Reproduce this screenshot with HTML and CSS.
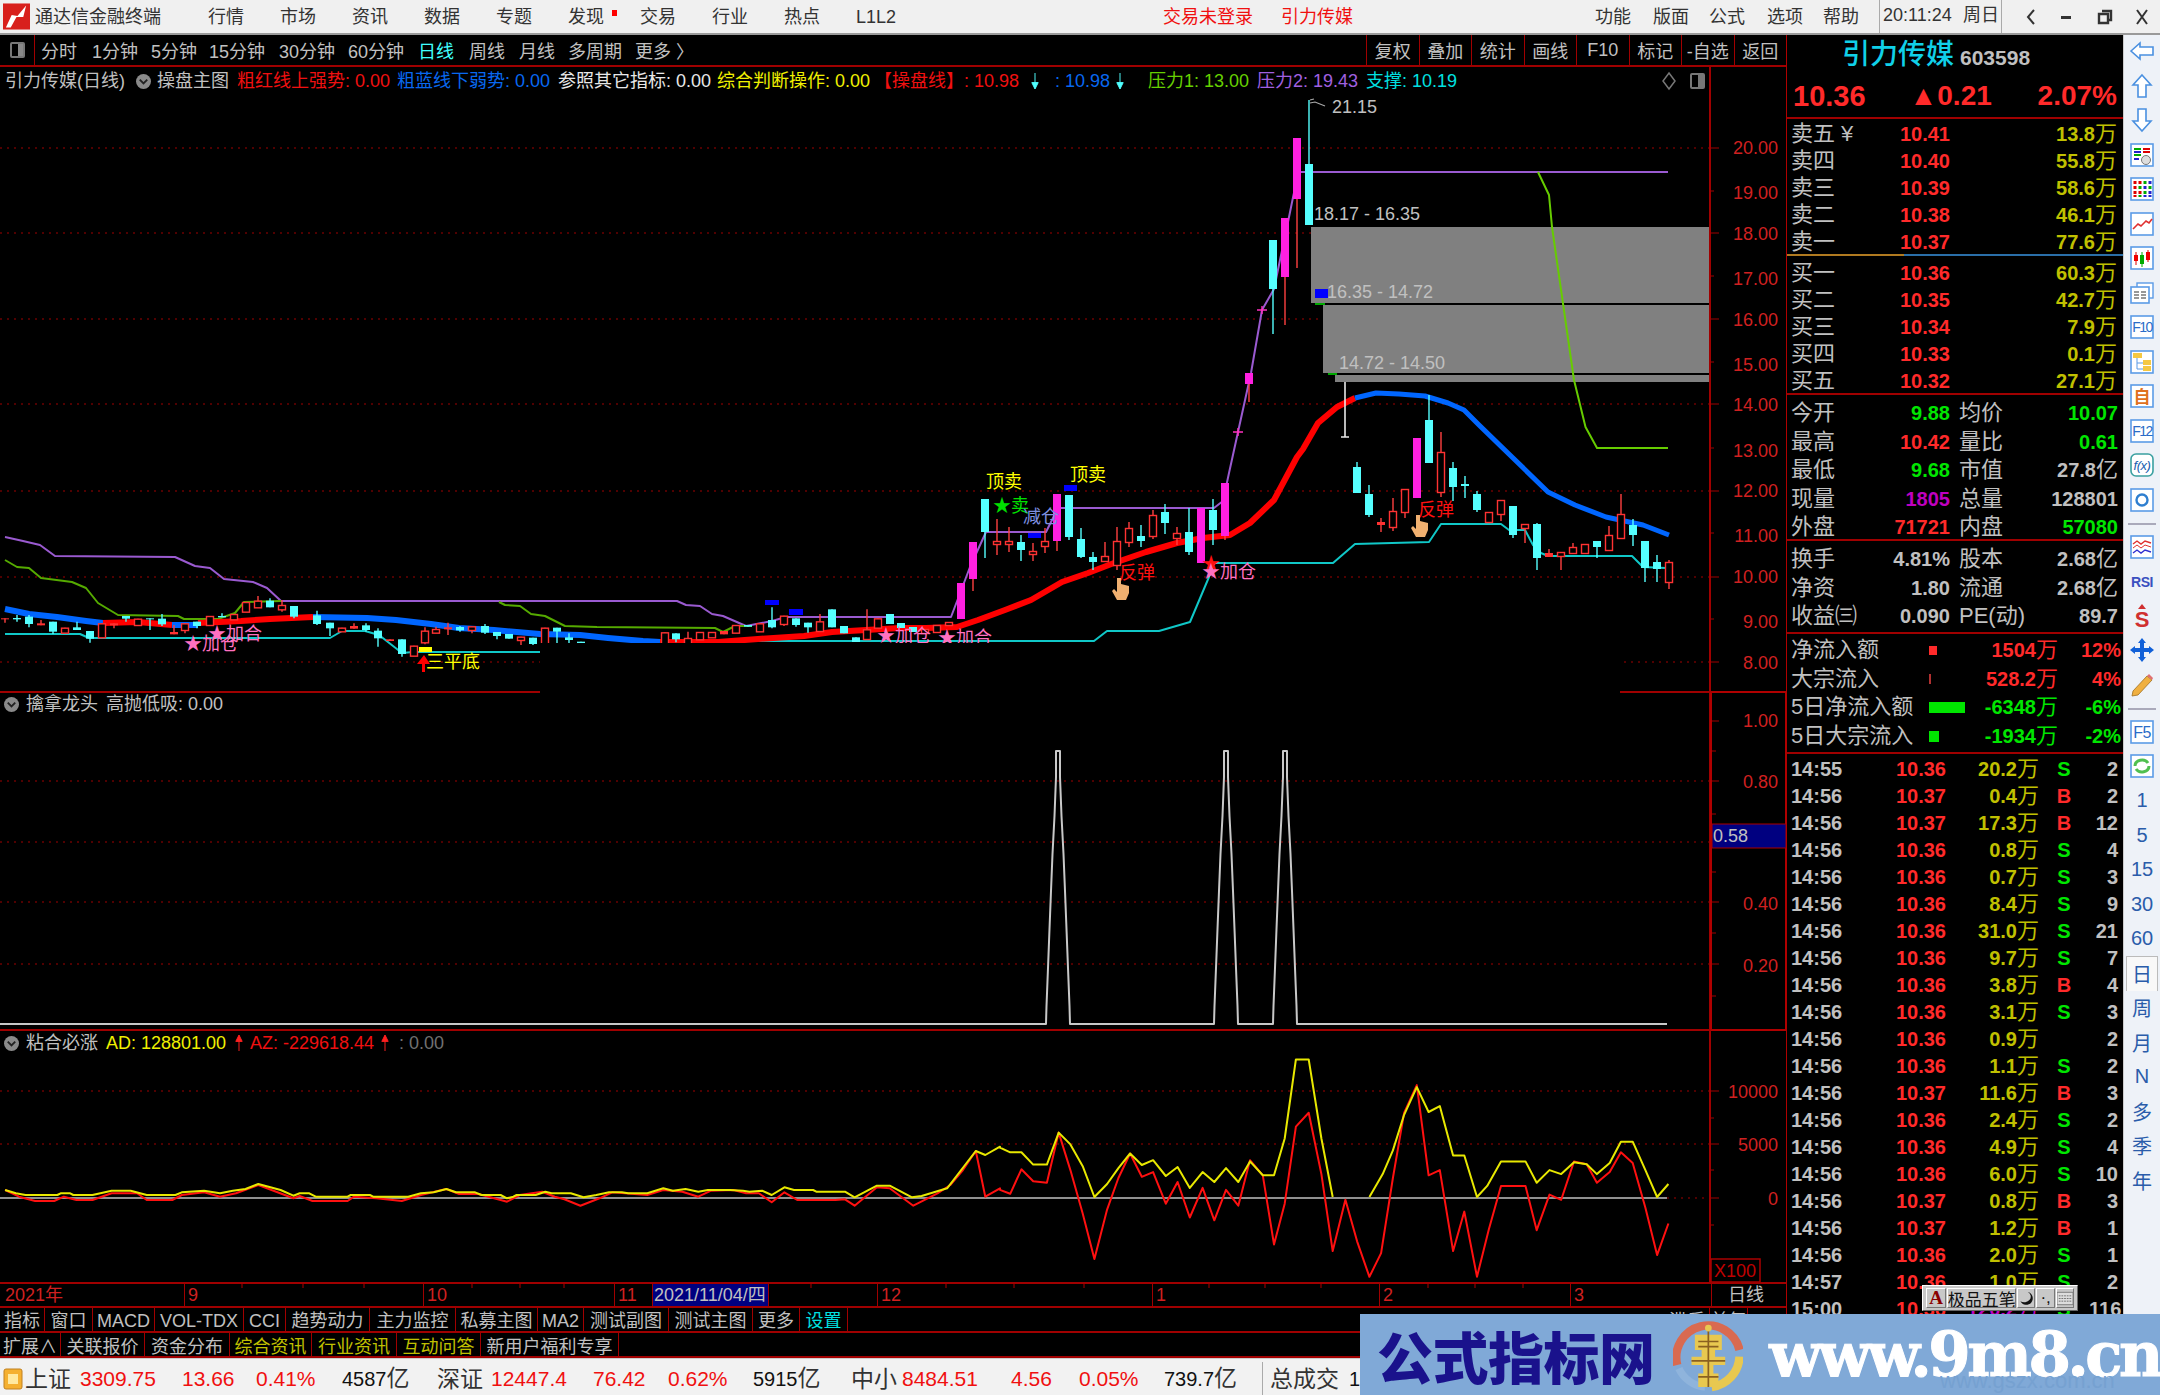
FILE: index.html
```html
<!DOCTYPE html>
<html lang="zh-CN">
<head>
<meta charset="utf-8">
<title>通达信金融终端</title>
<link rel="stylesheet" href="styles.css">
</head>
<body>
<div class="app">
  <header class="menubar">
    <svg class="logo" viewBox="0 0 28 27"><rect width="28" height="27" fill="#d8201c"/><path d="M3 25 L9 12 L15 13 L24 2 L21 14 L14 14 L8 25Z" fill="#fff"/></svg>
    <span class="apptitle">通达信金融终端</span>
    <span>行情</span><span>市场</span><span>资讯</span><span>数据</span><span>专题</span><span class="dot">发现</span><span>交易</span><span>行业</span><span>热点</span><span>L1L2</span>
    <span></span>
    <span class="alert">交易未登录</span><span class="alert">引力传媒</span>
    <span>功能</span><span>版面</span><span>公式</span><span>选项</span><span>帮助</span>
    <span class="clock">20:11:24</span><span class="week">周日</span><span></span>
    <svg class="win" viewBox="0 0 16 16"><path d="M11 1 L5 8 L11 15" fill="none" stroke="#333" stroke-width="2"/></svg>
    <svg class="win" viewBox="0 0 16 16"><rect x="3" y="7" width="10" height="3" fill="#333"/></svg>
    <svg class="win" viewBox="0 0 16 16"><path d="M5 2h9v9h-3M2 5h9v9H2z" fill="none" stroke="#333" stroke-width="2.4"/></svg>
    <svg class="win" viewBox="0 0 16 16"><path d="M3 1 L13 15 M13 1 L3 15" stroke="#333" stroke-width="2"/></svg>
  </header>

  <div class="main">
    <div class="leftcol">
      <nav class="toolbar">
        <span class="tbicon"><i></i></span>
        <div class="periods">
          <span>分时</span><span>1分钟</span><span>5分钟</span><span>15分钟</span><span>30分钟</span><span>60分钟</span><span class="on">日线</span><span>周线</span><span>月线</span><span>多周期</span><span>更多 〉</span>
        </div>
        <div class="tbbtns"><span>复权</span><span>叠加</span><span>统计</span><span>画线</span><span>F10</span><span>标记</span><span>-自选</span><span>返回</span></div>
      </nav>

      <section class="chart">
        <svg id="plot" class="plot" viewBox="0 67 1786 1215" width="1786" height="1215">
          <g class="dots">
            <path d="M0 148H1710M0 233H1710M0 319H1710M0 404H1710M0 491H1710M0 577H1710M0 662H1710"/>
            <path d="M0 781H1710M0 842H1710M0 902H1710M0 964H1710"/>
            <path d="M0 1091H1710M0 1144H1710M1667 1198H1710"/>
          </g>
          <g class="gray">
            <rect x="1311" y="227" width="399" height="76"/>
            <rect x="1323" y="305" width="387" height="68"/>
            <rect x="1335" y="375" width="375" height="7"/>
          </g>
          <g id="lines"></g>
          <g id="candles"></g>
          <g class="glabels">
            <text x="1332" y="113">21.15</text>
            <text x="1314" y="220">18.17 - 16.35</text>
            <text x="1327" y="298" class="onGray">16.35 - 14.72</text>
            <text x="1339" y="369" class="onGray">14.72 - 14.50</text>
          </g>
          <path d="M1310 100 l4 -1 M1310 103 l5 -1 l10 4" fill="none" stroke="#aaa" stroke-width="1.2"/>
          <rect x="1315" y="289" width="13" height="9" fill="#0000ff"/>
          <g class="marks">
            <rect x="765" y="600" width="14" height="5"/><rect x="789" y="609" width="14" height="6"/>
            <rect x="1064" y="485" width="13" height="6"/><rect x="1028" y="533" width="13" height="5"/>
          </g>
          <rect x="419" y="647" width="13" height="5" fill="#ffff00"/>
          <g class="sig">
            <text x="426" y="668" class="yl">三平底</text>
            <text x="184" y="650" class="pk">★加仓</text>
            <text x="208" y="640" class="pk">★加合</text>
            <text x="877" y="642" class="pk">★加仓</text>
            <text x="938" y="644" class="pk">★加合</text>
            <text x="986" y="488" class="yl">顶卖</text>
            <text x="1070" y="481" class="yl">顶卖</text>
            <text x="993" y="512" class="gn">★卖</text>
            <text x="1023" y="523" class="bl">减仓</text>
            <text x="1119" y="579" class="rd">反弹</text>
            <text x="1418" y="516" class="rd">反弹</text>
            <text x="1202" y="570" class="rd">★</text>
            <text x="1202" y="578" class="pk">★加仓</text>
          </g>
          <path d="M424 655 l-7 9 h5 v8 h3 v-8 h5z" fill="#ff0000"/>
          <g class="hand">
            <path d="M1117 578 v14 l-3 -3 l-2 2 l5 9 h9 l3 -7 v-7 l-8 -2 v-6z"/>
            <path d="M1416 515 v14 l-3 -3 l-2 2 l5 9 h9 l3 -7 v-7 l-8 -2 v-6z"/>
          </g>
          <rect x="540" y="643" width="1080" height="54" fill="#000"/>
          <path class="divider" d="M0 692H540M1620 692H1786M0 1030H1786M1710 67V1282"/>
          <path class="boxline" d="M1711 692V1030M1786 692V1030M1711 692H1786M1711 1030H1786"/>
          <path class="ticks" d="M1710 148h9M1710 191h4M1710 233h9M1710 276h4M1710 319h9M1710 362h4M1710 404h9M1710 448h4M1710 491h9M1710 533h4M1710 577h9M1710 619h4M1710 662h9M1712 721h7M1712 751h4M1712 781h7M1712 814h4M1712 842h4M1712 872h4M1712 902h7M1712 933h4M1712 964h7M1712 996h4M1710 1091h9M1710 1118h4M1710 1144h9M1710 1170h4M1710 1198h9M1710 1225h4"/>
          <g class="axis">
            <text x="1778" y="154">20.00</text><text x="1778" y="199">19.00</text><text x="1778" y="240">18.00</text><text x="1778" y="285">17.00</text><text x="1778" y="326">16.00</text><text x="1778" y="371">15.00</text><text x="1778" y="411">14.00</text><text x="1778" y="457">13.00</text><text x="1778" y="497">12.00</text><text x="1778" y="542">11.00</text><text x="1778" y="583">10.00</text><text x="1778" y="628">9.00</text><text x="1778" y="669">8.00</text>
            <text x="1778" y="727">1.00</text><text x="1778" y="788">0.80</text><text x="1778" y="910">0.40</text><text x="1778" y="972">0.20</text>
            <text x="1778" y="1098">10000</text><text x="1778" y="1151">5000</text><text x="1778" y="1205">0</text>
          </g>
          <rect x="1712" y="824" width="74" height="24" fill="#000080" stroke="#a00" stroke-width="1"/>
          <text x="1713" y="842" class="curval">0.58</text>
          <rect x="1711" y="1259" width="49" height="23" fill="#000" stroke="#a00" stroke-width="1.5"/>
          <text x="1714" y="1277" class="x100">X100</text>
        </svg>

        <div class="legend lg1">
          <span class="t">引力传媒(日线)</span>
          <svg class="chev" viewBox="0 0 16 16"><circle cx="8" cy="8" r="8" fill="#8a8a8a"/><path d="M4 6 L8 10 L12 6" fill="none" stroke="#222" stroke-width="2"/></svg>
          <span class="t">操盘主图</span>
          <span class="c-red">粗红线上强势: 0.00</span>
          <span class="c-blue">粗蓝线下弱势: 0.00</span>
          <span class="c-white">参照其它指标: 0.00</span>
          <span class="c-yel">综合判断操作: 0.00</span>
          <span class="c-red">【操盘线】: 10.98</span>
          <svg class="arr" viewBox="0 0 10 20"><path d="M5 0V19M1 12 L5 20 L9 12Z" fill="#50ffff" stroke="#50ffff" stroke-width="1.2"/></svg>
          <span class="c-blue">: 10.98</span>
          <svg class="arr" viewBox="0 0 10 20"><path d="M5 0V19M1 12 L5 20 L9 12Z" fill="#50ffff" stroke="#50ffff" stroke-width="1.2"/></svg>
          <span class="c-grn">压力1: 13.00</span>
          <span class="c-pur">压力2: 19.43</span>
          <span class="c-tl">支撑: 10.19</span>
        </div>
        <svg class="mini diamond" viewBox="0 0 16 20"><path d="M8 2 L14 10 L8 18 L2 10Z" fill="none" stroke="#777" stroke-width="1.5"/></svg>
        <span class="mini toggle"><i></i></span>

        <div class="legend lg2">
          <svg class="chev" viewBox="0 0 16 16"><circle cx="8" cy="8" r="8" fill="#8a8a8a"/><path d="M4 6 L8 10 L12 6" fill="none" stroke="#222" stroke-width="2"/></svg>
          <span class="t">擒拿龙头</span><span class="t">高抛低吸: 0.00</span>
        </div>
        <div class="legend lg3">
          <svg class="chev" viewBox="0 0 16 16"><circle cx="8" cy="8" r="8" fill="#8a8a8a"/><path d="M4 6 L8 10 L12 6" fill="none" stroke="#222" stroke-width="2"/></svg>
          <span class="t">粘合必涨</span><span class="c-yel">AD: 128801.00</span>
          <svg class="arr" viewBox="0 0 10 20"><path d="M5 20V1M1 8 L5 0 L9 8Z" fill="#ff2020" stroke="#ff2020" stroke-width="1.2"/></svg>
          <span class="c-red">AZ: -229618.44</span>
          <svg class="arr" viewBox="0 0 10 20"><path d="M5 20V1M1 8 L5 0 L9 8Z" fill="#ff2020" stroke="#ff2020" stroke-width="1.2"/></svg>
          <span class="c-dim">: 0.00</span>
        </div>
      </section>

      <div class="timeaxis">
        <span>2021年</span><span>9</span><span>10</span><span>11</span><span class="curdate">2021/11/04/四</span><span></span><span>12</span><span>1</span><span>2</span><span>3</span><span class="dayline">日线</span>
        <svg class="tt" viewBox="0 0 1786 6" width="1786" height="6"><path d="M242 0v4M303 0v4M364 0v4M472 0v4M520 0v4M564 0v4M811 0v4M946 0v4M1014 0v4M1084 0v4M1209 0v4M1265 0v4M1321 0v4M1428 0v4M1475 0v4M1523 0v4" stroke="#a00" stroke-width="1"/></svg>
      </div>
      <div class="tabs tabs1">
        <span>指标</span><span>窗口</span><span>MACD</span><span>VOL-TDX</span><span>CCI</span><span>趋势动力</span><span>主力监控</span><span>私募主图</span><span>MA2</span><span>测试副图</span><span>测试主图</span><span>更多</span><span class="c-tl">设置</span>
        <span class="nb"></span><span>滞后</span><span>前复</span>
      </div>
      <div class="tabs tabs2">
        <span>扩展∧</span><span>关联报价</span><span>资金分布</span><span class="c-ol">综合资讯</span><span class="c-ol">行业资讯</span><span class="c-ol">互动问答</span><span>新用户福利专享</span>
      </div>
    </div>

    <aside class="quote">
      <div class="qname"><span class="nm">引力传媒</span><b>603598</b></div>
      <div class="qprice"><b>10.36</b><b class="chg">▲0.21</b><b class="pct">2.07%</b></div>

      <div class="qblock book sell">
        <div><span>卖五<em>¥</em></span><b class="r">10.41</b><b class="y">13.8<i>万</i></b></div>
        <div><span>卖四</span><b class="r">10.40</b><b class="y">55.8<i>万</i></b></div>
        <div><span>卖三</span><b class="r">10.39</b><b class="y">58.6<i>万</i></b></div>
        <div><span>卖二</span><b class="r">10.38</b><b class="y">46.1<i>万</i></b></div>
        <div><span>卖一</span><b class="r">10.37</b><b class="y">77.6<i>万</i></b></div>
      </div>
      <div class="qblock book buy">
        <div><span>买一</span><b class="r">10.36</b><b class="y">60.3<i>万</i></b></div>
        <div><span>买二</span><b class="r">10.35</b><b class="y">42.7<i>万</i></b></div>
        <div><span>买三</span><b class="r">10.34</b><b class="y">7.9<i>万</i></b></div>
        <div><span>买四</span><b class="r">10.33</b><b class="y">0.1<i>万</i></b></div>
        <div><span>买五</span><b class="r">10.32</b><b class="y">27.1<i>万</i></b></div>
      </div>
      <div class="qblock stat s5">
        <div><span>今开</span><b class="g">9.88</b><span>均价</span><b class="g">10.07</b></div>
        <div><span>最高</span><b class="r">10.42</b><span>量比</span><b class="g">0.61</b></div>
        <div><span>最低</span><b class="g">9.68</b><span>市值</span><b class="w">27.8<i>亿</i></b></div>
        <div><span>现量</span><b class="m">1805</b><span>总量</span><b class="w">128801</b></div>
        <div><span>外盘</span><b class="r">71721</b><span>内盘</span><b class="g">57080</b></div>
      </div>
      <div class="qblock stat s3">
        <div><span>换手</span><b class="w">4.81%</b><span>股本</span><b class="w">2.68<i>亿</i></b></div>
        <div><span>净资</span><b class="w">1.80</b><span>流通</span><b class="w">2.68<i>亿</i></b></div>
        <div><span>收益㈢</span><b class="w">0.090</b><span>PE(动)</span><b class="w">89.7</b></div>
      </div>
      <div class="qblock money">
        <div><span>净流入额</span><u class="bar b1"></u><b class="r">1504<i>万</i></b><b class="r">12%</b></div>
        <div><span>大宗流入</span><u class="bar b2"></u><b class="r">528.2<i>万</i></b><b class="r">4%</b></div>
        <div><span>5日净流入额</span><u class="bar b3"></u><b class="g">-6348<i>万</i></b><b class="g">-6%</b></div>
        <div><span>5日大宗流入</span><u class="bar b4"></u><b class="g">-1934<i>万</i></b><b class="g">-2%</b></div>
      </div>
      <div class="ticks-list">
        <div><b class="w">14:55</b><b class="r">10.36</b><b class="y">20.2<i>万</i></b><b class="g">S</b><b class="w">2</b></div>
        <div><b class="w">14:56</b><b class="r">10.37</b><b class="y">0.4<i>万</i></b><b class="r">B</b><b class="w">2</b></div>
        <div><b class="w">14:56</b><b class="r">10.37</b><b class="y">17.3<i>万</i></b><b class="r">B</b><b class="w">12</b></div>
        <div><b class="w">14:56</b><b class="r">10.36</b><b class="y">0.8<i>万</i></b><b class="g">S</b><b class="w">4</b></div>
        <div><b class="w">14:56</b><b class="r">10.36</b><b class="y">0.7<i>万</i></b><b class="g">S</b><b class="w">3</b></div>
        <div><b class="w">14:56</b><b class="r">10.36</b><b class="y">8.4<i>万</i></b><b class="g">S</b><b class="w">9</b></div>
        <div><b class="w">14:56</b><b class="r">10.36</b><b class="y">31.0<i>万</i></b><b class="g">S</b><b class="w">21</b></div>
        <div><b class="w">14:56</b><b class="r">10.36</b><b class="y">9.7<i>万</i></b><b class="g">S</b><b class="w">7</b></div>
        <div><b class="w">14:56</b><b class="r">10.36</b><b class="y">3.8<i>万</i></b><b class="r">B</b><b class="w">4</b></div>
        <div><b class="w">14:56</b><b class="r">10.36</b><b class="y">3.1<i>万</i></b><b class="g">S</b><b class="w">3</b></div>
        <div><b class="w">14:56</b><b class="r">10.36</b><b class="y">0.9<i>万</i></b><b></b><b class="w">2</b></div>
        <div><b class="w">14:56</b><b class="r">10.36</b><b class="y">1.1<i>万</i></b><b class="g">S</b><b class="w">2</b></div>
        <div><b class="w">14:56</b><b class="r">10.37</b><b class="y">11.6<i>万</i></b><b class="r">B</b><b class="w">3</b></div>
        <div><b class="w">14:56</b><b class="r">10.36</b><b class="y">2.4<i>万</i></b><b class="g">S</b><b class="w">2</b></div>
        <div><b class="w">14:56</b><b class="r">10.36</b><b class="y">4.9<i>万</i></b><b class="g">S</b><b class="w">4</b></div>
        <div><b class="w">14:56</b><b class="r">10.36</b><b class="y">6.0<i>万</i></b><b class="g">S</b><b class="w">10</b></div>
        <div><b class="w">14:56</b><b class="r">10.37</b><b class="y">0.8<i>万</i></b><b class="r">B</b><b class="w">3</b></div>
        <div><b class="w">14:56</b><b class="r">10.37</b><b class="y">1.2<i>万</i></b><b class="r">B</b><b class="w">1</b></div>
        <div><b class="w">14:56</b><b class="r">10.36</b><b class="y">2.0<i>万</i></b><b class="g">S</b><b class="w">1</b></div>
        <div><b class="w">14:57</b><b class="r">10.36</b><b class="y">1.0<i>万</i></b><b class="g">S</b><b class="w">2</b></div>
        <div><b class="w">15:00</b><b class="r">10.36</b><b class="m">120.2<i>万</i></b><b class="g">S</b><b class="w">116</b></div>
      </div>
    </aside>

    <aside class="side">
      <div class="si"><svg viewBox="0 0 24 24"><polygon class="ar" points="1,12 10,4 10,8 23,8 23,16 10,16 10,20"/></svg></div>
      <div class="si"><svg viewBox="0 0 24 24"><polygon class="ar" points="12,1 21,11 16,11 16,23 8,23 8,11 3,11"/></svg></div>
      <div class="si"><svg viewBox="0 0 24 24"><polygon class="ar" points="12,23 21,13 16,13 16,1 8,1 8,13 3,13"/></svg></div>
      <div class="si"><svg viewBox="0 0 24 24"><rect class="bx" x="1" y="1" width="22" height="22"/><path d="M4 6h7M4 12h7" stroke="#0a0" stroke-width="2"/><path d="M13 6h7M13 9h7" stroke="#d00" stroke-width="2"/><path d="M4 9h7M4 16h5" stroke="#22c" stroke-width="2"/><circle cx="16" cy="17" r="4.5" fill="#ddd" stroke="#777"/></svg></div>
      <div class="si"><svg viewBox="0 0 24 24"><rect class="bx" x="1" y="1" width="22" height="22"/><path d="M5 4v3M5 9v3M5 14v3M5 18v2M10 4v3M10 14v3" stroke="#d00" stroke-width="3"/><path d="M10 9v3M15 4v3M15 14v3M10 18v2M20 9v3" stroke="#0a0" stroke-width="3"/><path d="M15 9v3M15 18v2M20 4v3M20 14v3M20 18v2" stroke="#22c" stroke-width="3"/></svg></div>
      <div class="si"><svg viewBox="0 0 24 24"><rect class="bx" x="1" y="1" width="22" height="22"/><path d="M3 17 L8 12 L11 14 L16 9 L19 11 L22 7" fill="none" stroke="#e03030" stroke-width="1.6"/></svg></div>
      <div class="si"><svg viewBox="0 0 24 24"><rect class="bx" x="1" y="1" width="22" height="22"/><path d="M6 6v13M18 4v12" stroke="#d00" stroke-width="1"/><rect x="4" y="9" width="4" height="6" fill="#e00"/><rect x="10" y="9" width="4" height="9" fill="#0a0"/><rect x="16" y="6" width="4" height="8" fill="#e00"/><path d="M12 6v15" stroke="#0a0" stroke-width="1"/></svg></div>
      <div class="si"><svg viewBox="0 0 24 24"><rect x="7" y="2" width="16" height="15" fill="#fff" stroke="#5b9be6" stroke-width="1.4"/><rect class="bx" x="1" y="6" width="18" height="16"/><path d="M4 11h5M11 11h5M4 14h5M11 14h5M4 17h5M11 17h5" stroke="#777" stroke-width="1.5"/></svg></div>
      <div class="si"><svg viewBox="0 0 24 24"><rect class="bx" x="1" y="1" width="22" height="22"/><text x="12" y="17" class="fk">F10</text></svg></div>
      <div class="si"><svg viewBox="0 0 24 24"><rect class="bx" x="1" y="1" width="22" height="22"/><path d="M7 7v12h6M7 13h6" stroke="#5b9be6" fill="none"/><rect x="3" y="3" width="9" height="5" fill="#f5c842"/><rect x="13" y="10" width="8" height="5" fill="#f5c842"/><rect x="13" y="16" width="8" height="5" fill="#f5c842"/></svg></div>
      <div class="si"><svg viewBox="0 0 24 24"><rect class="bx" x="1" y="1" width="22" height="22"/><text x="12" y="19" class="zi">自</text></svg></div>
      <div class="si"><svg viewBox="0 0 24 24"><rect class="bx" x="1" y="1" width="22" height="22"/><text x="12" y="17" class="fk">F12</text></svg></div>
      <div class="si"><svg viewBox="0 0 24 24"><rect x="1" y="1" width="22" height="22" rx="5" fill="#fff" stroke="#3aa0a0" stroke-width="1.6"/><text x="12" y="17" class="fx">f(x)</text></svg></div>
      <div class="si"><svg viewBox="0 0 24 24"><rect class="bx" x="1" y="1" width="22" height="22"/><circle cx="12" cy="12" r="5.5" fill="none" stroke="#2f7fd0" stroke-width="2.4"/></svg></div>
      <div class="sep"></div>
      <div class="si"><svg viewBox="0 0 24 24"><rect class="bx" x="1" y="1" width="22" height="22"/><path d="M3 9 L7 6 L11 9 L15 6 L21 8" fill="none" stroke="#e03030" stroke-width="1.4"/><path d="M3 13 L7 10 L11 13 L15 10 L21 12" fill="none" stroke="#e03030" stroke-width="1"/><path d="M3 18 L7 15 L11 18 L15 15 L21 17" fill="none" stroke="#3030d0" stroke-width="1.4"/></svg></div>
      <div class="si"><svg viewBox="0 0 24 24"><text x="12" y="18" class="rsi">RSI</text></svg></div>
      <div class="si"><svg viewBox="0 0 24 24"><path d="M12 0 L16 5 H8Z" fill="#d03030"/><text x="12" y="23" class="dl">S</text></svg></div>
      <div class="si"><svg viewBox="0 0 24 24"><path d="M12 0 L16 5 H14 V10 H19 V8 L24 12 L19 16 V14 H14 V19 H16 L12 24 L8 19 H10 V14 H5 V16 L0 12 L5 8 V10 H10 V5 H8Z" fill="#1060d8"/></svg></div>
      <div class="si"><svg viewBox="0 0 24 24"><path d="M3 18 L17 3 L22 7 L8 22 L2 23Z" fill="#f0b040" stroke="#a07020" stroke-width=".8"/><path d="M17 3 L19 1 L23 5 L22 7Z" fill="#e07070"/></svg></div>
      <div class="sep"></div>
      <div class="si"><svg viewBox="0 0 24 24"><rect class="bx" x="1" y="1" width="22" height="22"/><text x="12" y="18" class="fk f5">F5</text></svg></div>
      <div class="si"><svg viewBox="0 0 24 24"><rect class="bx" x="1" y="1" width="22" height="22"/><path d="M5 12 A7 6 0 0 1 18 9 M19 12 A7 6 0 0 1 6 15" fill="none" stroke="#50c050" stroke-width="3"/></svg></div>
      <div class="si txt">1</div><div class="si txt">5</div><div class="si txt">15</div><div class="si txt">30</div><div class="si txt">60</div>
      <div class="si txt cur">日</div><div class="si txt">周</div><div class="si txt">月</div><div class="si txt">N</div><div class="si txt">多</div><div class="si txt">季</div><div class="si txt">年</div>
    </aside>
  </div>

  <footer class="status">
    <svg class="sico" viewBox="0 0 20 22"><rect x="1" y="1" width="18" height="20" rx="2" fill="#f5b030" stroke="#c08020"/><rect x="5" y="6" width="10" height="10" fill="#ffe9a0"/></svg>
    <span class="sl">上证</span><span class="sv">3309.75</span><span class="sv">13.66</span><span class="sv">0.41%</span><span class="sk">4587<i>亿</i></span>
    <span class="sl">深证</span><span class="sv">12447.4</span><span class="sv">76.42</span><span class="sv">0.62%</span><span class="sk">5915<i>亿</i></span>
    <span class="sl">中小</span><span class="sv">8484.51</span><span class="sv">4.56</span><span class="sv">0.05%</span><span class="sk">739.7<i>亿</i></span>
    <span class="ssep"></span><span class="sl">总成交</span><span class="sk">1</span>
  </footer>

  <div class="ime">
    <span class="imeA">A</span><span class="imeN">极品五笔</span>
    <span class="imeI"><svg viewBox="0 0 14 16"><path d="M9 1 A7 7 0 1 1 1 11 A7 6 0 0 0 9 1Z" fill="#111"/></svg></span>
    <span class="imeI">·,</span>
    <span class="imeI"><svg viewBox="0 0 18 16"><rect x="0" y="1" width="18" height="14" fill="#ddd" stroke="#777"/><path d="M2 5h14M2 8h14M2 11h14" stroke="#666" stroke-dasharray="2 1"/></svg></span>
  </div>

  <div class="banner">
    <span class="bt">公式指标网</span>
    <svg class="blogo" viewBox="0 0 84 80">
      <path d="M5 52 A38 38 0 1 1 79 34" fill="none" stroke="#d96a50" stroke-width="10"/>
      <path d="M79 42 A38 38 0 0 1 46 78" fill="none" stroke="#e8c850" stroke-width="10"/>
      <path d="M7 56 A38 38 0 0 0 38 78" fill="none" stroke="#8fb4dc" stroke-width="9"/>
      <path d="M26 16h32v18h-8v8h12v10h-14v10h6v16h-24v-16h6v-10h-14v-10h12v-8h-8z" fill="#e8c850"/>
      <path d="M30 24h24M30 30h24M22 47h40M42 10v68M30 66h24" stroke="#8a6020" stroke-width="2"/>
      <circle cx="42" cy="8" r="4" fill="#e8c850"/>
    </svg>
    <span class="burl">www.9m8.cn</span>
    <span class="bghost">www.gszx.com.cn</span>
  </div>
</div>
<script src="chart.js"></script>
</body>
</html>
```
FILE: styles.css
```css
* { box-sizing: border-box; }
html, body { margin: 0; padding: 0; }
body {
  width: 2160px; height: 1395px; overflow: hidden; background: #000;
  font-family: "Liberation Sans", "Noto Sans CJK SC", sans-serif;
  font-size: 18px; color: #c0c0c0;
}
.app { position: relative; width: 2160px; height: 1395px; display: flex; flex-direction: column; overflow: hidden; }

/* menu bar */
.menubar {
  height: 35px; flex: none; background: #f0f0f0; color: #333; border-bottom: 2px solid #9a9a9a;
  display: grid; align-items: center; line-height: 30px;
  grid-template-columns: 35px 173px repeat(10, 72px) 235px 118px 314px 58px 56px 58px 56px 56px 84px 39px 21px 35px 39px 37px 19px;
}
.logo { width: 27px; height: 27px; margin-left: 3px; }
.apptitle { font-size: 18px; }
.dot { position: relative; }
.dot::after { content: ""; position: absolute; left: 44px; top: 8px; width: 5px; height: 6px; background: #f00; }
.alert { color: #f01010; }
.clock { border-left: 1px solid #aaa; height: 33px; padding-left: 3px; font-size: 18px; color: #333; }
.week { border-right: 1px solid #aaa; height: 33px; }
.win { width: 16px; height: 16px; }

.main { flex: none; height: 1323px; display: flex; }
.leftcol { width: 1786px; flex: none; display: flex; flex-direction: column; }

/* toolbar */
.toolbar { height: 32px; flex: none; display: flex; align-items: center; border-bottom: 2px solid #a00000; }
.tbicon { width: 35px; height: 100%; border-right: 1px solid #a00000; display: flex; align-items: center; justify-content: center; }
.tbicon i { display: block; width: 15px; height: 16px; border: 2px solid #777; border-radius: 2px; background: linear-gradient(90deg, #000 55%, #888 55%); }
.periods { display: grid; grid-template-columns: 51px 59px 58px 70px 69px 70px 51px 50px 49px 67px 60px; margin-left: 6px; white-space: nowrap; }
.periods .on { color: #40ffff; }
.tbbtns { margin-left: auto; display: flex; height: 100%; }
.tbbtns span { width: 52.5px; border-left: 1px solid #a00000; display: flex; align-items: center; justify-content: center; }

/* chart */
.chart { position: relative; height: 1215px; flex: none; }
.plot { display: block; }
.dots path { stroke: #a00000; stroke-width: 1; stroke-dasharray: 2 5; fill: none; }
.gray rect { fill: #808080; }
.glabels text { font-size: 18px; fill: #c0c0c0; }
.marks rect { fill: #0000ff; }
.sig text { font-size: 18px; }
.yl { fill: #ffff00; } .pk { fill: #ff70c0; } .gn { fill: #00e000; } .bl { fill: #7f90e0; } .rd { fill: #ff1010; }
.hand path { fill: #f0b070; }
.divider { stroke: #a00000; stroke-width: 2; fill: none; }
.boxline { stroke: #b00000; stroke-width: 2; fill: none; }
.ticks { stroke: #a00000; stroke-width: 1; fill: none; }
.axis text { font-size: 18px; fill: #d02020; text-anchor: end; }
.curval { font-size: 18px; fill: #c0c0c0; }
.x100 { font-size: 18px; fill: #c00000; }
.legend { position: absolute; display: grid; align-items: center; height: 24px; left: 0; white-space: nowrap; line-height: 24px; }
.legend .t { color: #c0c0c0; }
.chev { width: 15px; height: 15px; }
.arr { width: 8px; height: 20px; }
.lg1 { top: 2px; grid-template-columns: 131px 21px 80px 160px 161px 159px 157px 157px 24px 61px 32px 109px 109px 100px; padding-left: 5px; }
.lg2 { top: 625px; grid-template-columns: 22px 80px 140px; padding-left: 4px; }
.lg3 { top: 964px; grid-template-columns: 22px 80px 129px 15px 131px 18px 60px; padding-left: 4px; }
.c-red { color: #f01010; } .c-blue { color: #0868f0; } .c-white { color: #e8e8e8; } .c-yel { color: #f0f000; }
.c-grn { color: #66d000; } .c-pur { color: #a060e0; } .c-tl { color: #00e0e0; } .c-dim { color: #707070; } .c-ol { color: #c0c000; }
.mini { position: absolute; }
.diamond { left: 1661px; top: 4px; width: 16px; height: 20px; }
.toggle { left: 1690px; top: 6px; width: 15px; height: 16px; border: 2px solid #777; border-radius: 2px; }
.toggle i { display: block; width: 5px; height: 12px; margin-left: 6px; background: #777; }

/* time axis and tabs */
.timeaxis {
  position: relative; height: 24px; flex: none; border-top: 2px solid #a00000;
  display: grid; align-items: stretch; line-height: 22px; color: #d02020;
  grid-template-columns: 184px 239px 191px 38px 116px 109px 275px 227px 191px 141px 75px;
}
.timeaxis span { border-left: 1px solid #a00000; padding-left: 3px; white-space: nowrap; overflow: hidden; }
.timeaxis span:first-child { border-left: 0; padding-left: 5px; }
.curdate { background: #000080; color: #c0c0c0; padding-left: 1px !important; }
.timeaxis .dayline { color: #c0c0c0; padding-left: 16px; }
.tt { position: absolute; left: 0; top: 0; }

.tabs { flex: none; display: grid; align-items: stretch; border-top: 2px solid #a00000; white-space: nowrap; line-height: 22px; }
.tabs span { display: flex; align-items: center; justify-content: center; border-right: 1px solid #a00000; padding-top: 2px; }
.tabs .nb { border-right: 0; }
.tabs1 { height: 25px; grid-template-columns: 45px 48px 62px 89px 42px 84px 86px 82px 46px 85px 84px 47px 48px 817px 45px 38px; border-top-width: 2px; }
.tabs2 { height: 27px; border-bottom: 2px solid #a00000; grid-template-columns: 61px 84px 85px 82px 85px 84px 138px; }
.tabs2 span { padding-top: 3px; }

/* quote panel */
.quote { width: 337px; flex: none; border-left: 1px solid #b00000; border-right: 0; overflow: hidden; background: #000; height: 1323px; }
.quote i { font-style: normal; font-weight: 400; font-size: 22px; }
.quote b { font-size: 20px; white-space: nowrap; }
.qname { height: 40px; display: flex; align-items: center; padding-left: 55px; gap: 6px; }
.qname .nm { font-size: 28px; font-weight: 500; color: #10d0e8; line-height: 40px; }
.qname b { font-size: 21px; color: #c0c0c0; padding-top: 6px; }
.qprice { height: 44px; display: flex; align-items: center; color: #ff2a2a; border-bottom: 2px solid #a00000; padding: 0 6px; }
.qprice b { font-size: 29px; }
.qprice .chg { margin-left: 44px; font-size: 28px; }
.qprice .pct { margin-left: auto; font-size: 28px; }
.qblock > div { display: grid; align-items: center; font-size: 22px; padding-left: 4px; line-height: 26px; padding-top: 2px; }
.qblock span { white-space: nowrap; }
.qblock em { font-style: normal; font-size: 22px; margin-left: 6px; }
.r { color: #ff2a2a; } .y { color: #c0c000; } .g { color: #00e600; } .w { color: #c0c0c0; } .m { color: #c000c0; }
.book { padding: 0; }
.book > div { height: 27px; grid-template-columns: 89px 70px 167px; }
.book b { text-align: right; }
.sell { border-bottom: 2px solid; border-image: linear-gradient(90deg, #b07a20 35%, #2a6ea8 35%) 1; height: 137px; }
.buy { padding-top: 2px; border-bottom: 2px solid #a00000; height: 139px; }
.stat b { text-align: right; }
.qblock.stat > div { grid-template-columns: 70px 89px 9px 80px 79px; height: 28.6px; padding-top: 4px; }
.stat > div > span:nth-of-type(2) { grid-column: 4; }
.s5 { height: 146px; padding-top: 1px; border-bottom: 2px solid #a00000; }
.s3 { height: 93px; padding-top: 1px; border-bottom: 2px solid #a00000; }
.money { height: 120px; padding-top: 1px; border-bottom: 2px solid #a00000; }
.money > div { height: 28.6px; grid-template-columns: 138px 50px 79px 63px; }
.money b { text-align: right; }
.bar { display: block; }
.b1 { width: 8px; height: 9px; background: #ff2a2a; }
.b2 { width: 2px; height: 10px; background: #b03030; }
.b3 { width: 36px; height: 11px; background: #00e600; }
.b4 { width: 10px; height: 11px; background: #00e600; }
.ticks-list { padding-top: 0; }
.ticks-list > div { display: grid; height: 27px; line-height: 26px; align-items: center; grid-template-columns: 89px 66px 93px 50px 29px; padding: 2px 0 0 4px; }
.ticks-list b:nth-child(2), .ticks-list b:nth-child(3), .ticks-list b:nth-child(5) { text-align: right; }
.ticks-list b:nth-child(4) { text-align: center; }

/* side bar */
.side { width: 37px; flex: none; background: #eef2f8; padding-top: 0; margin-left: 0; border-left: 1px solid #ccc; display: flex; flex-direction: column; align-items: stretch; }
.si { height: 34.5px; flex: none; display: flex; align-items: center; justify-content: center; margin-top: 0; }
.si:first-child { margin-top: -1px; }
.si svg { width: 24px; height: 24px; overflow: visible; }
.sep { height: 12.5px; flex: none; position: relative; }
.sep::after { content: ""; position: absolute; left: 4px; right: 4px; top: 6px; height: 2px; background: #aab; }
.ar { fill: #fff; stroke: #4a90e0; stroke-width: 1.6; }
.bx { fill: #fff; stroke: #5b9be6; stroke-width: 1.6; }
.fk { font-size: 14px; fill: #2a6cc8; text-anchor: middle; letter-spacing: -1.5px; }
.f5 { font-size: 16px; letter-spacing: -0.5px; }
.zi { font-size: 17px; fill: #e07020; text-anchor: middle; font-weight: 700; }
.fx { font-size: 13px; fill: #2060b0; text-anchor: middle; font-style: italic; letter-spacing: -0.5px; }
.rsi { font-size: 14px; font-weight: 700; fill: #3a50c0; text-anchor: middle; letter-spacing: -0.5px; }
.dl { font-size: 22px; font-weight: 700; fill: #d03030; text-anchor: middle; }
.txt { color: #2a5caa; font-size: 20px; }
.cur { background: #f8f8f8; border: 1px solid #bbb; border-bottom: 0; margin: 0 2px; }

/* status bar */
.status {
  flex: none; height: 37px; background: #f2f2f2; color: #222; align-items: center; border-top: 1px solid #ccc;
  display: grid; line-height: 38px; white-space: nowrap;
  grid-template-columns: 25px 55px 102px 74px 86px 95px 54px 102px 75px 85px 98px 51px 109px 68px 85px 98px 8px 79px 40px;
}
.sico { width: 20px; height: 22px; margin-left: 3px; }
.sl { font-size: 23px; color: #333; }
.sv { font-size: 21px; color: #f01010; }
.sk { font-size: 20px; color: #111; }
.sk i { font-style: normal; font-size: 23px; color: #333; }
.ssep { width: 1px; height: 34px; background: #aaa; }

/* input method bar */
.ime {
  position: absolute; left: 1922px; top: 1285px; width: 156px; height: 26px; padding: 2px 3px;
  background: #c8c8c8; border: 1px solid #fff; border-right-color: #666; border-bottom-color: #666;
  display: flex; gap: 1px; color: #111; font-size: 17px;
}
.ime span { display: flex; align-items: center; justify-content: center; background: #c8c8c8; border: 1px solid #fff; border-right-color: #777; border-bottom-color: #777; }
.imeA { width: 21px; color: #8b0000; font-family: "Liberation Serif", serif; font-weight: 700; font-size: 19px; }
.imeN { width: 72px; font-size: 17px; white-space: nowrap; overflow: hidden; }
.imeI { width: 19px; }
.imeI svg { width: 16px; height: 15px; }

/* watermark banner */
.banner {
  position: absolute; left: 1360px; top: 1314px; width: 800px; height: 81px; background: #80a9d7;
  display: flex; align-items: center;
}
.bt { margin-left: 17px; width: 283px; font-size: 56px; font-weight: 900; color: #1a128c; letter-spacing: -0.5px; line-height: 81px; white-space: nowrap; font-family: "Noto Sans CJK SC", sans-serif; }
.blogo { width: 84px; height: 80px; margin-left: 18px; }
.burl { margin-left: 26px; font-family: "DejaVu Serif", serif; font-weight: 700; font-size: 61px; color: #fff; letter-spacing: -3.4px; white-space: nowrap; line-height: 84px; -webkit-text-stroke: 1px #fff; }
.bghost { position: absolute; left: 580px; top: 54px; color: #76a1d1; font-size: 22px; }
```
FILE: chart.js
```js
(function () {
  var NS = 'http://www.w3.org/2000/svg';
  var lines = document.getElementById('lines');
  var candles = document.getElementById('candles');
  function el(parent, name, attrs) {
    var e = document.createElementNS(NS, name);
    for (var k in attrs) e.setAttribute(k, attrs[k]);
    parent.appendChild(e);
    return e;
  }
  var z11 = function (p) { return [p[0] / 1.568, 1020 + p[1] / 3]; };
  var z12 = function (p) { return [1000 + p[0] / 1.96, 680 + p[1] / 2.53]; };
  function id(p) { return p; }
  function pairs(a, f) {
    var out = [];
    for (var i = 0; i < a.length; i += 2) {
      var q = (f || id)([a[i], a[i + 1]]);
      out.push(q[0].toFixed(1) + ',' + q[1].toFixed(1));
    }
    return out;
  }
  function line(pts, color, width) {
    el(lines, 'polyline', { points: pts.join(' '), fill: 'none', stroke: color, 'stroke-width': width || 2, 'stroke-linejoin': 'round' });
  }

  var PUR = '#9a5ad0', GRN = '#55aa00', CYN = '#10c8c8';
  line(pairs([5,537,23,541,40,545,55,556,175,557,195,566,210,568,224,579,253,582,267,588,281,601,677,601,686,605,700,606,712,614,723,616,746,626,772,621,786,617,951,617,957.5,600,970,567,986,532,1046,532,1058,508,1214,508,1223,501,1229,473,1238,432,1251,373,1262,310,1274,289,1280,260,1288,222,1293.5,195,1299,172,1668,172]), PUR, 2);
  line(pairs([5,560,17,567,29,568,41,578,72,582,86,588,98,603,118,615,178,616,184,619,218,619,235,613,244,602,281,601]), GRN, 2);
  line(pairs([499,602,505,605,520,606,531,614,545,616,565,626,597,627,715,628,723,632,735,626,752,626]), GRN, 2);
  line(pairs([1538,172,1549,195,1552,227,1574,380,1585.5,427,1597,448,1668,448]), '#66cc00', 2);
  line(pairs([5,634,80,634,89,638,330,638,342,631,365,631,379,635,402,653,413,652,540,652]), CYN, 2);
  line(pairs([640,641,1094,641,1107,631,1159,631,1190,622,1209,577,1214,563,1333,563,1355,544,1429,542,1441,524,1501,524,1509,530,1525,530,1533,545,1541,553,1548,556,1632,556,1643,567,1666,568]), CYN, 2);

  var B = '#0066ff', R = '#ff0000';
  line(pairs([5,609,29,614,57,617,86,621,103,623]), B, 6);
  line(pairs([103,623,138,622,172,625]), R, 6);
  line(pairs([172,625,198,625]), B, 6);
  line(pairs([198,623,241,621,270,619,313,617]), R, 6);
  line(pairs([313,617,367,618,396,620,431,624,459,628,494,630,540,634,580,635,608,638,643,641,660,642]), B, 6);
  line(pairs([660,642,718,642,758,639,804,636,832,632,900,628,926,628,957,627,978,620,1005,610,1031,600,1062,582,1088,573,1114,563,1146,552,1177,543,1203,538,1230,535,1250,523,1274,500,1297,457,1303,449,1318,423,1337,407,1355,398]), R, 6);
  line(pairs([1355,398,1376,393,1399,394,1425,396,1448,403,1464,410,1479,425,1512,457,1548,492,1575,505,1606,517,1643,525,1669,535]), B, 5);

  var COL = { c: '#55ffff', r: '#ff3232', R: '#ff3232', m: '#ff20e0' };
  function candle(x, t, top, bot, wt, wb) {
    wt = wt === undefined ? top : wt; wb = wb === undefined ? bot : wb;
    var wc = t === 'c' ? COL.c : '#ff4040';
    el(candles, 'path', { d: 'M' + x + ' ' + wt + 'V' + wb, stroke: wc, 'stroke-width': 1.4, fill: 'none' });
    var h = Math.max(bot - top, 1);
    if (t === 'r') {
      el(candles, 'rect', { x: x - 3.5, y: top + 0.5, width: 7, height: h, fill: '#000', stroke: COL.r, 'stroke-width': 1.4 });
    } else {
      el(candles, 'rect', { x: x - 4, y: top, width: 8, height: h, fill: COL[t] });
    }
  }
  var right = [
    [0,'r',562,582,560,589],[1,'c',562,569,555,582],[2,'c',541,568,541,582],[3,'c',525,535,519,546],[4,'r',514,538,494,538],
    [5,'r',535,550,526,550],[6,'c',541,547,541,558],[7,'r',544,553],[8,'r',547,553,543,553],[9,'r',552,556,552,570],
    [10,'R',553,557,549,557],[11,'c',524,558,523,570],[12,'r',524,528,524,543],[13,'c',506,535,506,538],[14,'r',500,514,500,521],
    [15,'r',512,522],[16,'c',494,510,491,512],[17,'c',484,486,476,498],[18,'c',468,487,462,501],[19,'r',452,492,432,497],
    [20,'c',420,463,395,463],[21,'m',438,498],[22,'r',489,512,489,518],[23,'r',511,527,498,531],[24,'R',522,525,518,532],
    [25,'c',494,515,485,517],[26,'c',467,493,462,493],[30,'c',164,225,100,225],[31,'m',138,199,138,268],[32,'m',218,277,218,325],
    [33,'c',240,289,240,334],[35,'m',373,384,373,402],[37,'m',483,536,483,540],[38,'c',510,530,499,545],[39,'m',508,563],
    [40,'c',532,552,508,555],[41,'r',533,538,527,545],[42,'c',512,523,504,534],[43,'r',515,536,510,539],[44,'c',536,541,525,547],
    [45,'r',528,542,522,547],[46,'r',541,565,527,570],[47,'r',556,561,542,561],[48,'c',557,562,552,570],[49,'c',539,557,528,558],
    [50,'c',495,537,495,540],[51,'m',494,541,494,551],[52,'r',541,546,528,553],[53,'r',551,554,543,561],[54,'c',542,550,535,561],
    [55,'r',541,544,527,552],[56,'r',541,544,519,555],[57,'c',499,532,499,558],[58,'m',542,579,542,591],[59,'m',583,619],
    [60,'r',622,625],[61,'r',625,632],[62,'r',629,633],[63,'c',627,632],[64,'c',623,628]
  ];
  right.forEach(function (c) { candle(1669 - 12 * c[0], c[1], c[2], c[3], c[4], c[5]); });
  var left = [
    [8,'R',295,298,295,308],[29,'c',294,298,285,305],[51,'c',290,312,285,322],[72,'R',310,316,300,316],[93,'c',305,335,305,342],
    [114,'r',323,338],[135,'c',322,330,305,330],[156,'c',333,356,333,368],[177,'r',310,352],[198,'R',310,316,310,325],
    [219,'c',288,296,288,305],[240,'r',296,315],[261,'c',295,298,295,330],[282,'c',296,313,282,318],[303,'R',336,343,315,343],
    [323,'r',310,330,310,340],[344,'c',305,318,305,325],[365,'r',288,315],[386,'c',288,292,280,292],[407,'r',282,298],
    [428,'r',246,275],[449,'r',242,262,228,262],[470,'c',242,262,235,262],[491,'r',255,268,240,275],[512,'c',258,290,258,295],
    [553,'c',286,312,272,315],[574,'c',308,325,308,348],[595,'r',323,334],[616,'R',318,326,310,326],[637,'c',316,330,310,335],
    [658,'c',332,355,325,380],[679,'R',358,363],[700,'c',358,402,358,410],[721,'r',377,407],[741,'r',332,367,322,373],
    [760,'r',327,338,320,338],[781,'R',322,328,308,345],[802,'c',321,331,318,335],[823,'r',319,330,319,340],[844,'c',318,338,312,342],
    [865,'c',336,348,336,358],[886,'c',342,356],[907,'r',350,360,350,375],[928,'c',353,372,353,375],[949,'r',323,370],
    [970,'c',323,335,323,370],[991,'c',352,360,340,370],[1012,'c',365,372],[1158,'r',337,372],[1177,'c',340,358,340,367],
    [1198,'r',354,372,335,372],[1219,'r',336,358],[1240,'r',336,352],[1261,'R',333,343],[1282,'r',315,338],[1303,'c',315,320],
    [1324,'r',310,334],[1345,'c',300,322,262,325],[1366,'r',287,312,287,318],[1386,'c',295,315,295,320],[1407,'c',308,322,308,338],
    [1428,'r',304,333,282,333],[1449,'c',268,322],[1470,'c',318,340],[1491,'c',352,366],[1510,'r',328,357,268,357],[1530,'r',295,323],[1551,'c',282,312]
  ];
  function zy(v) { return v === undefined ? undefined : 520 + v / 3; }
  left.forEach(function (c) { candle(Math.round(c[0] / 1.742), c[1], zy(c[2]), zy(c[3]), zy(c[4]), zy(c[5])); });

  el(candles, 'path', { d: 'M1345 382V437M1341 437h8', stroke: '#e8e8e8', 'stroke-width': 1.6, fill: 'none' });
  el(candles, 'path', { d: 'M1328 374h9M1315 304h10', stroke: '#00e000', 'stroke-width': 1.6, fill: 'none' });
  el(candles, 'path', { d: 'M1257 310h10M1262 306v8M1233 432h10M1238 428v8', stroke: '#ff30c0', 'stroke-width': 1.4, fill: 'none' });

  var S = [[-12,1024],[-11.5,1006],[-10,968],[-8.5,929],[-7,891],[-5.5,854],[-3.5,816],[-2,777],[-2,751]];
  function spike(c) {
    var p = [];
    S.forEach(function (s) { p.push((c + s[0]) + ',' + s[1]); });
    S.slice().reverse().forEach(function (s) { p.push((c - s[0]) + ',' + s[1]); });
    return p;
  }
  var base = ['0,1024'];
  [1058, 1226, 1285].forEach(function (c) { base = base.concat(spike(c)); });
  base.push('1667,1024');
  line(base, '#c8c8c8', 2);

  el(lines, 'path', { d: 'M0 1198H1667', stroke: '#909090', 'stroke-width': 2, fill: 'none' });
  var yl = pairs([8,510,25,520,40,525,90,525,95,520,110,520,115,525,145,525,175,512,205,512,230,525,275,525,285,517,320,512,335,517,345,520,365,512,385,507,405,492,440,510,460,527,470,520,485,520,495,530,545,530,550,525,580,525,585,530,640,530,660,520,680,517,700,507,715,517,745,517,755,525,785,525,795,535,805,530,810,525,840,525,855,515,865,520,895,520,915,532,935,525,955,517,975,517,985,520,1015,520,1040,505,1055,512,1075,507,1095,515,1110,510,1145,510,1165,512,1175,515,1195,512,1210,525,1230,502,1245,510,1275,510,1280,515,1325,515,1340,532,1375,497,1395,497,1430,532,1445,528,1485,505,1530,393,1545,405,1568,380], z11);
  var rd = pairs([8,510,30,530,55,543,85,543,100,530,120,540,145,540,175,520,215,520,230,540,270,540,285,525,320,517,345,530,370,520,405,495,460,535,470,528,490,543,545,543,555,530,590,535,630,543,660,525,700,507,720,522,750,522,785,540,795,545,815,525,850,515,870,530,885,538,910,557,940,535,960,517,1015,525,1040,510,1070,515,1095,530,1115,512,1150,510,1170,520,1190,520,1210,547,1230,517,1250,540,1280,540,1310,540,1325,538,1340,557,1375,502,1395,505,1432,557,1470,520,1490,495,1510,450,1530,393,1545,530,1568,505], z11);
  var rd2 = pairs([0,1290,20,1300,42,1238,65,1268,92,1272,115,1145,138,1240,162,1350,185,1465,210,1340,232,1260,255,1198,278,1257,300,1245,325,1325,348,1270,372,1360,397,1285,420,1367,443,1290,467,1330,490,1215,515,1253,537,1428,558,1325,580,1130,605,1095,630,1250,652,1445,677,1315,700,1420,724,1510,747,1450,770,1260,792,1095,817,1025,840,1253,862,1240,888,1445,910,1345,935,1510,958,1390,982,1280,1030,1280,1052,1392,1077,1302,1100,1315,1125,1218,1150,1225,1170,1272,1195,1245,1217,1195,1240,1222,1265,1335,1288,1455,1310,1375], z12);
  var yl2a = pairs([0,1183,20,1195,42,1195,65,1226,92,1226,115,1145,138,1175,162,1230,185,1308,210,1275,232,1235,255,1198,278,1227,300,1215,325,1255,348,1232,372,1285,397,1245,420,1270,443,1235,467,1270,490,1218,515,1253,537,1253,558,1160,580,960,605,960,630,1160,652,1308], z12);
  var yl2b = pairs([724,1308,750,1250,770,1190,792,1100,817,1030,840,1093,862,1078,888,1203,910,1203,935,1308,955,1280,982,1218,1030,1218,1052,1272,1077,1240,1100,1250,1125,1220,1150,1225,1170,1250,1195,1222,1217,1168,1240,1168,1265,1240,1288,1308,1310,1275], z12);
  line(rd.concat(rd2), '#ff1010', 2);
  line(yl.concat(yl2a), '#e8e800', 2);
  line(yl2b, '#e8e800', 2);
})();
```
